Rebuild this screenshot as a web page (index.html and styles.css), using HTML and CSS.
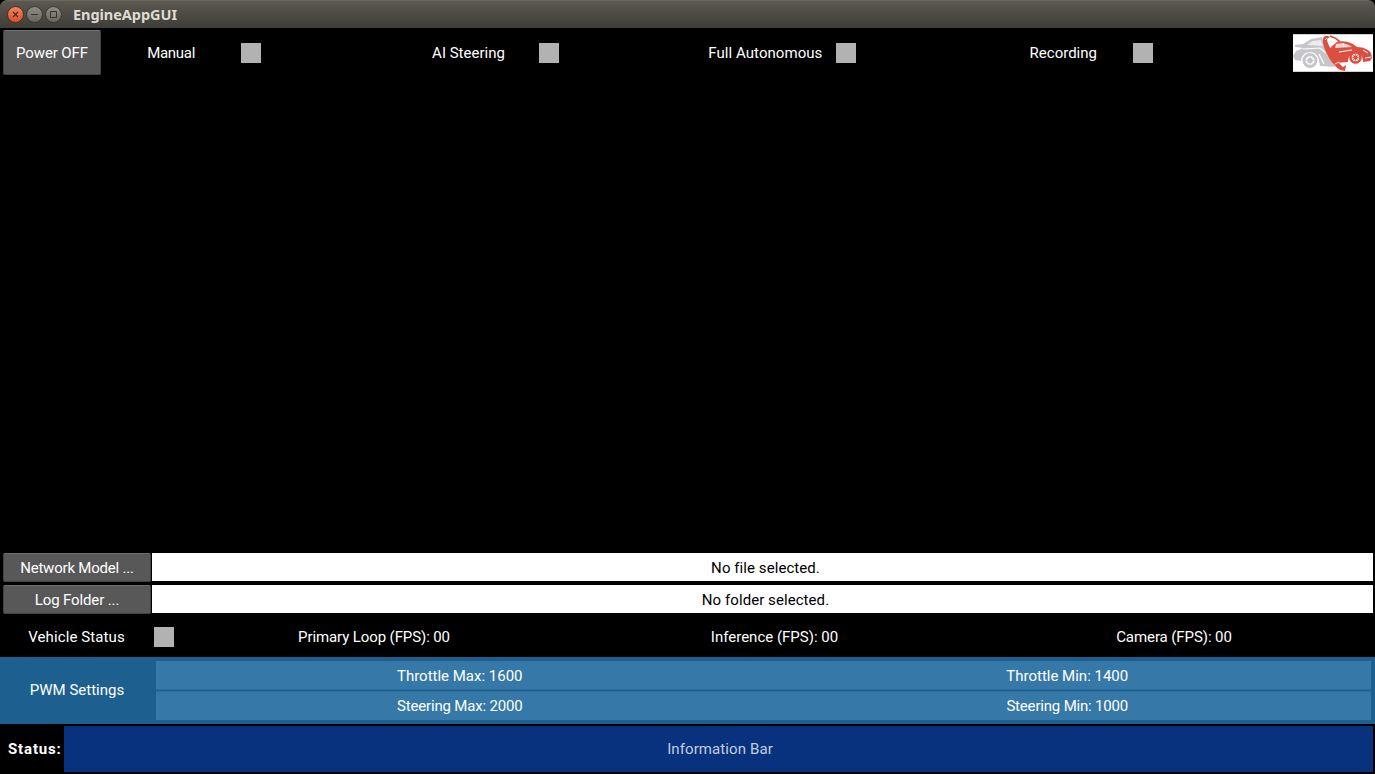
FILE: index.html
```html
<!DOCTYPE html>
<html lang="en">
<head>
<meta charset="utf-8">
<title>EngineAppGUI</title>
<link rel="stylesheet" href="styles.css">
</head>
<body>
<div class="window">
  <header class="titlebar">
    <svg class="controls" width="58" height="20" viewBox="0 0 58 20">
      <defs>
        <linearGradient id="close" x1="0" y1="0" x2="0" y2="1"><stop offset="0" stop-color="#f58360"/><stop offset="1" stop-color="#e2501f"/></linearGradient>
        <linearGradient id="grey" x1="0" y1="0" x2="0" y2="1"><stop offset="0" stop-color="#908e85"/><stop offset="1" stop-color="#66645c"/></linearGradient>
      </defs>
      <g stroke="#34332e">
        <circle cx="9.5" cy="9.5" r="8" fill="url(#close)"/>
        <circle cx="28.5" cy="9.5" r="8" fill="url(#grey)"/>
        <circle cx="47.5" cy="9.5" r="8" fill="url(#grey)"/>
        <path d="M7 7l5 5M12 7l-5 5" stroke-width="1.1"/>
        <path d="M25 9.5h7M44.5 6.5h6v6h-6z" fill="none" stroke-width="1"/>
      </g>
    </svg>
    <h1 class="title">EngineAppGUI</h1>
  </header>
  <section class="modes">
    <button class="button power">Power OFF</button>
    <div class="mode"><span class="mode-label tight">Manual</span><i class="box"></i></div>
    <div class="mode"><span class="mode-label">AI Steering</span><i class="box"></i></div>
    <div class="mode"><span class="mode-label wide">Full Autonomous</span><i class="box"></i></div>
    <div class="mode"><span class="mode-label">Recording</span><i class="box"></i></div>
    <svg class="logo" width="80" height="38" viewBox="0 0 80 38">
      <path d="M0 0h80v38H0z" fill="#fff"/>
      <path d="M0 .5h80M0 37.5h80" stroke="#d0d0d0"/>
      <g class="rear">
        <path d="M2 11l8-1 8-5 11-2 2 8 3 10 8 12-15-1-1-5c0-5-4-9-9-9s-9 4-9 9l-6-1-2-4 3-5 8-3-9-1z" fill="#c6c5ca"/>
        <path d="M14 11l6-4 8-1 2 6z" fill="#ededf0"/>
        <path d="M10 15l17-1 6 5M26 20l5 10" fill="none" stroke="#fff" stroke-width="1.2"/>
        <circle cx="17" cy="26.5" r="6" fill="#fff" stroke="#c6c5ca" stroke-width="3"/>
        <circle cx="17" cy="26.5" r="2.6" fill="#c6c5ca"/>
        <path d="M17 22v9M12.5 26.5h9M14 23.5l6 6M20 23.5l-6 6" stroke="#c6c5ca" stroke-width=".8"/>
      </g>
      <g class="front">
        <path d="M39 12l5-4c8-2 14 0 20 5 7 0 12 3 14 6l1 5-2 3-7 1c0-6-3-9-7-9s-8 3-8 9l-13 1-8-11z" fill="#dc4e40"/>
        <path d="M43 10c7-2 12 0 16 3l-17 1z" fill="#f6d5d0"/>
        <path d="M50 9l1 4M46 18l13-2M70 16l5 3M72 24l6-1" fill="none" stroke="#fff" stroke-width="1"/>
        <circle cx="62.5" cy="23.5" r="5" fill="#fff" stroke="#dc4e40" stroke-width="2.6"/>
        <circle cx="62.5" cy="23.5" r="2.2" fill="#dc4e40"/>
        <path d="M62.5 19.5v8M58.5 23.5h8M59.7 20.7l5.6 5.6M65.3 20.7l-5.6 5.6" stroke="#dc4e40" stroke-width=".7"/>
      </g>
      <path d="M37 3c-5-3-8 0-7 6 2 10 9 22 17 27l5 1 1-6-3 2c-5-4-8-10-11-16-3-5-5-9-5-12z" fill="#dc4e40"/>
      <path d="M37 2c4 1 7 3 10 6" fill="none" stroke="#dc4e40" stroke-width="1.8"/>
      <path d="M32 6l2-2M42 30l4-2" stroke="#fff" stroke-width=".9"/>
    </svg>
  </section>
  <main class="view"></main>
  <section class="files">
    <button class="button model">Network Model ...</button><div class="file"><span>No file selected.</span></div>
    <button class="button folder">Log Folder ...</button><div class="file"><span>No folder selected.</span></div>
  </section>
  <section class="vehicle">
    <span class="vehicle-label">Vehicle Status</span><i class="box"></i>
    <div class="rates"><span class="primary">Primary Loop (FPS): 00</span><span>Inference (FPS): 00</span><span class="camera">Camera (FPS): 00</span></div>
  </section>
  <section class="pwm">
    <span class="pwm-label">PWM Settings</span>
    <div class="pwm-rows">
      <div class="pwm-row throttle"><span>Throttle Max: 1600</span><span>Throttle Min: 1400</span></div>
      <div class="pwm-row steering"><span>Steering Max: 2000</span><span>Steering Min: 1000</span></div>
    </div>
  </section>
  <footer class="status"><b class="status-label">Status:</b><div class="info">Information Bar</div></footer>
</div>
</body>
</html>
```
FILE: styles.css
```css
* { box-sizing: border-box; }
body { margin: 0; background: #000; }
.window {
  width: 1375px; height: 774px; display: flex; flex-direction: column;
  background: #000; color: #fff; font: 15px/18px Roboto, sans-serif; white-space: nowrap; overflow: hidden;
}
.titlebar {
  height: 28px; flex: none; display: flex; align-items: center; padding-left: 6px;
  background: linear-gradient(#5b5950, #3e3d38); border-top: 1px solid #6b695f; border-radius: 7px 7px 0 0;
}
.controls { display: block; margin-top: 1px; }
.title { margin: -2px 0 0 9px; font: bold 14.5px/20px "Noto Sans", sans-serif; letter-spacing: -.05px; color: #dfdbd2; }
.button {
  margin: 0; padding: 0; color: #fff; font: inherit; background: #585858;
  border: 1px solid #424242; border-top-color: #707070; border-radius: 2px;
}
.modes { height: 49px; flex: none; display: flex; align-items: center; padding: 0 2px 0 3px; }
.power { width: 98px; height: 45px; letter-spacing: -.1px; }
.mode { width: 297.4px; flex: none; display: flex; align-items: center; }
.mode-label { width: 140.2px; text-align: center; }
.tight { letter-spacing: -.3px; }
.wide { letter-spacing: .05px; padding-right: 1px; }
.box { width: 20px; height: 20px; flex: none; background: #b2b2b2; }
.logo { display: block; margin-left: auto; flex: none; filter: blur(.35px); }
.view { flex: 1; }
.files {
  display: grid; grid-template-columns: 148px 1221px; grid-auto-rows: 29px; gap: 3px 1px;
  padding: 0 2px 0 3px; height: 61px; flex: none;
}
.model { letter-spacing: -.2px; }
.folder { letter-spacing: -.12px; }
.file { height: 28px; display: flex; align-items: center; justify-content: center; padding: 2px 0 0 6px; background: #fff; color: #000; letter-spacing: .07px; }
.vehicle { height: 43px; flex: none; display: flex; align-items: center; padding-top: 3px; }
.vehicle-label { width: 154px; text-align: center; letter-spacing: .1px; padding-right: 1px; }
.rates { flex: 1; display: grid; grid-template-columns: 400px 401px 1fr; text-align: center; }
.primary { letter-spacing: -.1px; }
.camera { letter-spacing: -.08px; padding-right: 2px; }
.pwm { height: 67px; flex: none; display: flex; align-items: center; background: #1d608f; padding-right: 4px; }
.pwm-label { width: 156px; text-align: center; padding: 0 2px 2px 0; }
.pwm-rows { flex: 1; display: grid; gap: 1px; }
.pwm-row { height: 29px; display: grid; grid-template-columns: 1fr 1fr; align-items: center; text-align: center; background: #3679a8; }
.throttle { padding-top: 2px; border-bottom: 1px solid #2a6c9b; }
.steering { border-top: 1px solid #2a6c9b; letter-spacing: -.18px; }
.status { height: 50px; flex: none; display: flex; align-items: center; padding: 2px 2px 2px 8px; }
.status-label { width: 56px; letter-spacing: .85px; }
.info { flex: 1; height: 46px; display: flex; align-items: center; justify-content: center; padding-left: 3px; background: #08327e; color: #c3cde0; letter-spacing: .1px; }
```
